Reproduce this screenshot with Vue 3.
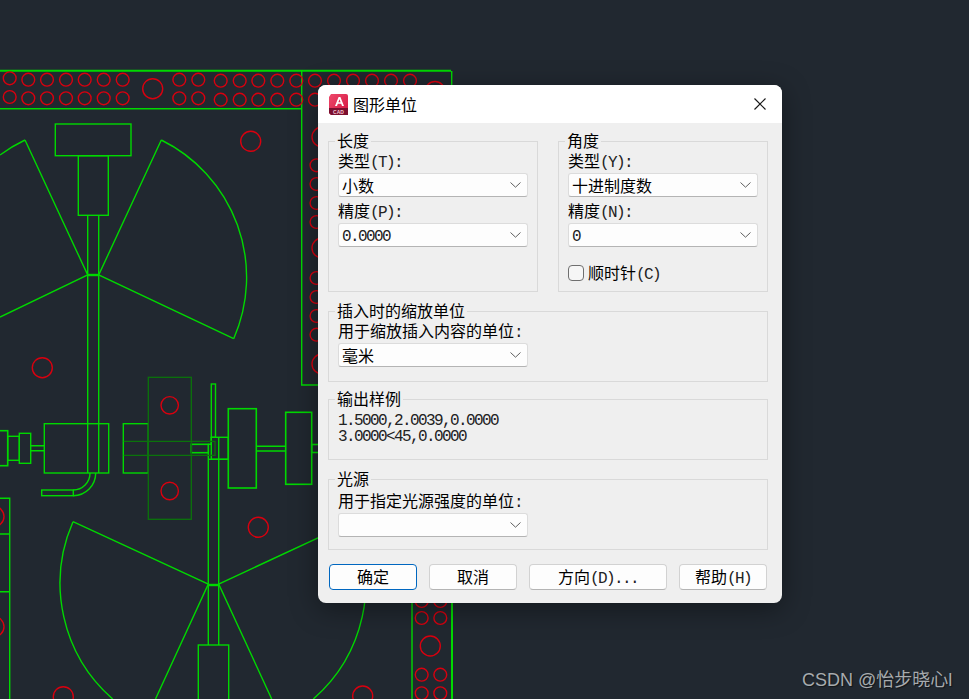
<template>
  <div class="desktop">
    <!-- CAD drawing behind the dialog -->
    <svg class="drawing" width="969" height="699" viewBox="0 0 969 699">
      <g fill="none" stroke="#00d800" stroke-width="1.4">
        <path class="thick" d="M0 70.7H451" stroke-width="2" />
        <path d="M0 108.7H302M301.7 71V385H330M451.7 71V110" />
        <path d="M412 600V699" />
        <path d="M452 600V699" stroke-width="2" />

        <!-- upper fan -->
        <rect x="55.3" y="124" width="75.7" height="31.7" />
        <rect x="78.3" y="155.7" width="30" height="59.6" />
        <path d="M87.7 215.3V473M98.7 215.3V473" />
        <path d="M87.7 275H98.7" stroke-width="2.4" />
        <path d="M25 140L87.7 275L0 317M25 140A153 153 0 0 0 0 155" />
        <path d="M161.3 140L98.7 275L233.7 338.7M161.3 140A153 153 0 0 1 233.7 338.7" />

        <!-- motor and shaft -->
        <rect x="44.3" y="423.7" width="64.4" height="49.3" />
        <rect x="-4" y="430.7" width="11.7" height="35" stroke-width="1.6" />
        <rect x="7.7" y="436.3" width="11.6" height="24" />
        <rect x="19.3" y="433.3" width="11.4" height="30" />
        <path d="M30.7 445.7H44.3M30.7 450.7H44.3" />
        <path d="M90 473A16.7 17 0 0 1 73.3 490M95.7 473A22.4 22.7 0 0 1 73.3 495.7" />
        <rect x="41.7" y="490" width="31.6" height="5.7" />
        <rect x="123.3" y="423.7" width="25" height="49.3" />
        <rect x="191.3" y="444.3" width="17" height="8.4" stroke-width="1.6" />
        <rect x="211.3" y="384" width="4.2" height="53.3" />
        <path d="M208.3 452.7V645M218.7 437.3V645M208.3 444.3H211.3V437.3" />
        <rect x="211.3" y="437.3" width="17" height="22" />
        <path d="M208.3 459.3H228.3" />
        <rect x="228.3" y="408.7" width="28" height="79.3" stroke-width="1.6" />
        <path d="M256.3 446.3H285.7M256.3 451H285.7" />
        <rect x="285.7" y="412.3" width="26" height="72" stroke-width="1.6" />
        <rect x="311.7" y="444.5" width="14" height="8" stroke-width="1.6" />

        <!-- lower left frame -->
        <path d="M0 498.3H9.7V699M0 534H9.7M0 591.7H9.7" />

        <!-- lower fan -->
        <path d="M208.3 585H218.7" stroke-width="2.4" />
        <path d="M73 521.7L208.3 584L155.5 699M73 521.7A153.5 153.5 0 0 0 112.7 699" />
        <path d="M353 521.7L218.7 584L271.7 699M353 521.7A153.5 153.5 0 0 1 313.3 699" />
        <rect x="198.3" y="645" width="30.4" height="60" />
      </g>

      <g fill="none" stroke="#0b730b" stroke-width="1.3">
        <rect x="148.3" y="377.3" width="43" height="142" />
        <path d="M123.7 441.3H215V455.3H123.7" />
      </g>

      <g fill="none" stroke="#d9000f" stroke-width="1.4">
        <circle v-for="(c, i) in circles" :key="i" :cx="c[0]" :cy="c[1]" :r="c[2]" />
      </g>
    </svg>

    <div class="dialog">
      <div class="titlebar">
        <svg class="app-icon" width="20" height="21" viewBox="0 0 20 21">
          <defs>
            <linearGradient id="acad" x1="0" y1="0" x2="1" y2="1">
              <stop offset="0" stop-color="#ee4a6c" />
              <stop offset="1" stop-color="#d3123f" />
            </linearGradient>
          </defs>
          <path d="M3 0H18a2 2 0 0 1 2 2V21H3L1 19V3Z" fill="url(#acad)" />
          <path d="M1 14H20V21H3L1 19Z" fill="#7b0f2f" />
          <path d="M7 12L10.6 3H12.4L16 12H14L13.2 9.8H9.8L9 12ZM10.4 8.2H12.6L11.5 5.2Z" fill="#fff" />
          <text x="10.5" y="19.6" class="icon-label" text-anchor="middle">CAD</text>
        </svg>
        <span class="title">图形单位</span>
        <svg class="close" width="12" height="12" viewBox="0 0 12 12">
          <path d="M0.5 0.5L11.5 11.5M11.5 0.5L0.5 11.5" stroke="#1a1a1a" stroke-width="1.2" fill="none" />
        </svg>
      </div>

      <div class="body">
        <div class="top-row">
          <fieldset class="group">
            <legend>长度</legend>
            <div class="label first">类型<span class="en">(T):</span></div>
            <div class="select"><span>小数</span><svg class="chev" width="11" height="6" viewBox="0 0 11 6"><path d="M0.5 0.5L5.5 5.2L10.5 0.5" /></svg></div>
            <div class="label second">精度<span class="en">(P):</span></div>
            <div class="select"><span class="en">0.0000</span><svg class="chev" width="11" height="6" viewBox="0 0 11 6"><path d="M0.5 0.5L5.5 5.2L10.5 0.5" /></svg></div>
          </fieldset>
          <fieldset class="group">
            <legend>角度</legend>
            <div class="label first">类型<span class="en">(Y):</span></div>
            <div class="select"><span>十进制度数</span><svg class="chev" width="11" height="6" viewBox="0 0 11 6"><path d="M0.5 0.5L5.5 5.2L10.5 0.5" /></svg></div>
            <div class="label second">精度<span class="en">(N):</span></div>
            <div class="select"><span class="en">0</span><svg class="chev" width="11" height="6" viewBox="0 0 11 6"><path d="M0.5 0.5L5.5 5.2L10.5 0.5" /></svg></div>
            <div class="check-row">
              <span class="checkbox"></span>
              <span class="check-text">顺时针<span class="en">(C)</span></span>
            </div>
          </fieldset>
        </div>

        <fieldset class="group insert">
          <legend>插入时的缩放单位</legend>
          <div class="label first">用于缩放插入内容的单位<span class="en">:</span></div>
          <div class="select"><span>毫米</span><svg class="chev" width="11" height="6" viewBox="0 0 11 6"><path d="M0.5 0.5L5.5 5.2L10.5 0.5" /></svg></div>
        </fieldset>

        <fieldset class="group sample">
          <legend>输出样例</legend>
          <div class="sample-line en">1.5000,2.0039,0.0000</div>
          <div class="sample-line en">3.0000&lt;45,0.0000</div>
        </fieldset>

        <fieldset class="group light">
          <legend>光源</legend>
          <div class="label">用于指定光源强度的单位<span class="en">:</span></div>
          <div class="select"><span></span><svg class="chev" width="11" height="6" viewBox="0 0 11 6"><path d="M0.5 0.5L5.5 5.2L10.5 0.5" /></svg></div>
        </fieldset>

        <div class="buttons">
          <button class="btn primary">确定</button>
          <button class="btn">取消</button>
          <button class="btn wide">方向<span class="en">(D)...</span></button>
          <button class="btn">帮助<span class="en">(H)</span></button>
        </div>
      </div>
    </div>

    <div class="watermark">CSDN @怡步晓心l</div>
  </div>
</template>

<script setup>
// small red holes: [cx, cy, r]
const circles = [];

const addRow = (xs, y, r = 6.4) => {
  xs.forEach((x) => circles.push([x, y, r]));
};

// top band
addRow([9.7], 78.3);
addRow([9.7], 97);
addRow([28.3, 47, 66, 84.7, 103.7, 122.7, 179.3, 198.3], 79.7);
addRow([28.3, 47, 66, 84.7, 103.7, 122.7, 179.3, 198.3], 98.3);
addRow([220.7, 239.7, 258.3, 277.3, 296.3, 315, 334, 353, 372, 391, 410], 80.7);
addRow([220.7, 239.7, 258.3, 277.3, 296.3, 315], 99.7);

// strip to the right of x=302
addRow([316.5], 165.3);
addRow([316.5], 184);
addRow([316.5], 203);
addRow([316.5], 222);
addRow([316.5], 278);
addRow([316.5], 297);
addRow([316.5], 316);
addRow([316.5], 334.7);

// bottom strip
[601, 618, 674.7, 693.3].forEach((y) => addRow([421.7, 440.3], y));

// large ones
[
  [152.7, 88.7],
  [250.7, 141.3],
  [322, 137],
  [322, 248],
  [322, 364],
  [435, 91.5],
  [42.3, 367.7],
  [258.3, 527.3],
  [63.3, 696.7],
  [362.7, 696],
  [430.3, 646],
  [-6, 516.5],
  [-6, 626.7],
].forEach(([x, y]) => circles.push([x, y, 10]));

circles.push([169.7, 405.3, 8.7], [169.7, 491, 8.7]);
</script>

<style scoped>
.desktop {
  position: relative;
  width: 969px;
  height: 699px;
  overflow: hidden;
  background: #212830;
  font-family: "Noto Sans CJK SC", "Liberation Sans", sans-serif;
  font-size: 16px;
  line-height: 16px;
  color: #000;
}

.drawing {
  display: block;
}

.dialog {
  position: absolute;
  left: 318px;
  top: 85px;
  width: 464px;
  height: 518px;
  border-radius: 8px;
  overflow: hidden;
  background: #efefef;
  box-shadow: 0 6px 28px rgba(0, 0, 0, 0.4);
}

.titlebar {
  display: flex;
  align-items: center;
  height: 38px;
  padding: 0 16px 0 10px;
  background: #fff;
}

.app-icon {
  margin-right: 5px;
}

.icon-label {
  font-family: "Liberation Sans", sans-serif;
  font-size: 5px;
  font-weight: 700;
  fill: #f3c6d2;
}

.title {
  flex: 1;
}

.body {
  display: flex;
  flex-direction: column;
  padding: 10px 14px 0 10px;
}

.top-row {
  display: grid;
  grid-template-columns: 210px 210px;
  column-gap: 20px;
}

.group {
  min-width: 0;
  margin: 0;
  padding: 0 9px;
  border: 1px solid #d9d9d9;
}

.group legend {
  margin-left: -3px;
  padding: 0 2px;
  height: 16px;
  line-height: 14px;
}

.label {
  height: 16px;
  margin-bottom: 4px;
  line-height: 14px;
  white-space: nowrap;
}

.label.first {
  margin-top: 4px;
}

.label.second {
  margin-top: 6px;
}

/* half-width latin, like the dialog's bitmap font */
.en {
  font-family: "Liberation Mono", monospace;
  font-size: 16px;
  font-weight: 400;
  letter-spacing: -1.6px;
  line-height: 0;
  color: #222;
}

.select {
  display: flex;
  align-items: center;
  justify-content: space-between;
  box-sizing: border-box;
  width: 190px;
  height: 24px;
  padding: 0 6px 0 3px;
  background: #fdfdfd;
  border: 1px solid #dcdcdc;
  border-bottom-color: #b4b4b4;
  border-radius: 3px;
}

.select .en {
  line-height: 16px;
  margin-top: 3px;
}

.chev path {
  fill: none;
  stroke: #5f5f5f;
  stroke-width: 1;
}

.check-row {
  display: flex;
  align-items: center;
  gap: 4px;
  height: 16px;
  margin-top: 18px;
  padding-bottom: 10px;
}

.check-text {
  line-height: 14px;
  height: 16px;
}

.checkbox {
  box-sizing: border-box;
  width: 16px;
  height: 16px;
  background: #f6f6f6;
  border: 1px solid #6f6f6f;
  border-radius: 4px;
}

.insert {
  margin-top: 11px;
  padding-bottom: 14px;
}

.sample {
  margin-top: 9px;
  padding-top: 6px;
  padding-bottom: 14px;
}

.sample-line {
  display: block;
  height: 16px;
  line-height: 16px;
}

.light {
  margin-top: 11px;
  padding-bottom: 12px;
}

.light .label {
  margin-top: 6px;
}

.buttons {
  display: flex;
  gap: 12px;
  margin: 14px 0 0 1px;
}

.btn {
  box-sizing: border-box;
  width: 88px;
  height: 26px;
  padding: 0 0 2px;
  background: #fdfdfd;
  border: 1px solid #d2d2d2;
  border-bottom-color: #b4b4b4;
  border-radius: 4px;
  font: inherit;
  color: #000;
}

.btn.wide {
  width: 138px;
}

.btn.primary {
  border: 1px solid #0067c0;
}

.watermark {
  position: absolute;
  left: 802px;
  top: 670px;
  font-family: "Liberation Sans", "Noto Sans CJK SC", sans-serif;
  font-size: 18px;
  line-height: 20px;
  white-space: nowrap;
  color: #a7abae;
  text-shadow: 1px 1px 1px rgba(0, 0, 0, 0.5);
}
</style>
